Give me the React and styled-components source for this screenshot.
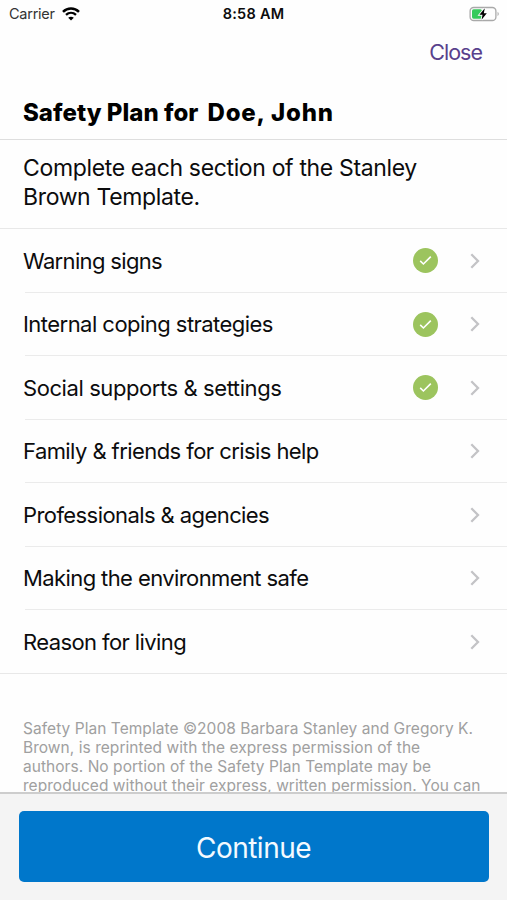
import React from 'react';
import styled, { createGlobalStyle, css } from 'styled-components';

const GlobalStyle = createGlobalStyle`
  *, *::before, *::after {
    box-sizing: border-box;
  }

  body {
    margin: 0;
    background: #fefefe;
    color: #0c0c0d;
    font-family: Inter, 'Liberation Sans', sans-serif;
  }
`;

const Screen = styled.div`
  display: flex;
  flex-direction: column;
  width: 507px;
  height: 900px;
  overflow: hidden;
`;

const StatusBar = styled.div`
  display: grid;
  grid-template-columns: 1fr auto 1fr;
  align-items: center;
  flex: none;
  height: 27px;
  padding: 0 7px 0 9px;
`;

const Carrier = styled.div`
  display: flex;
  align-items: center;
  gap: 7px;
  color: #333;
  font-size: 14.5px;
  letter-spacing: -0.25px;
`;

const Time = styled.div`
  padding-right: 2px;
  font-size: 14.5px;
  font-weight: 600;
  letter-spacing: 0.25px;
`;

const BatterySlot = styled.div`
  display: flex;
  justify-content: flex-end;
`;

const NavBar = styled.div`
  display: flex;
  align-items: center;
  justify-content: flex-end;
  flex: none;
  height: 51px;
  padding: 0 25px 2px;
`;

const CloseButton = styled.button`
  padding: 0;
  border: none;
  background: transparent;
  color: #58408c;
  font-family: inherit;
  font-size: 21.5px;
  letter-spacing: -1px;
`;

const Title = styled.h1`
  display: flex;
  gap: 9px;
  flex: none;
  height: 62px;
  margin: 0;
  padding: 0 23px;
  border-bottom: 1px solid #dedede;
  color: #000;
  font-size: 24px;
  font-weight: 800;
  line-height: 70px;
  letter-spacing: 0.03px;
  white-space: nowrap;
`;

const PatientName = styled.span`
  letter-spacing: 0.85px;
`;

const Intro = styled.p`
  flex: none;
  height: 88px;
  margin: 0;
  padding: 14px 23px 0;
  font-size: 23px;
  line-height: 29px;
  letter-spacing: -0.35px;
`;

const SectionList = styled.ul`
  flex: none;
  margin: 0;
  padding: 0;
  border-top: 1px solid #e8e8e8;
  border-bottom: 1px solid #e8e8e8;
  list-style: none;
`;

const SectionRow = styled.li`
  display: flex;
  align-items: center;
  height: ${({ $last }) => ($last ? 63 : 63.5)}px;
  padding: 0 26px 0 23px;

  ${({ $last }) =>
    !$last &&
    css`
      background: linear-gradient(#ebebeb, #ebebeb) 25px 100% / 100% 1px
        no-repeat;
    `}
`;

const SectionLabel = styled.span`
  flex: 1;
  font-size: 22px;
  letter-spacing: ${({ $tracking }) => $tracking}px;
  white-space: nowrap;
`;

const CheckBadge = styled.span`
  display: flex;
  align-items: center;
  justify-content: center;
  width: 25px;
  height: 25px;
  margin-right: 31px;
  border-radius: 50%;
  background: #9cc45e;
`;

const Legal = styled.div`
  flex: 1;
  min-height: 0;
  padding: 44.5px 23px 0;
  color: #a0a0a0;
  font-size: 15.5px;
  line-height: 19px;
  white-space: nowrap;
`;

const LegalLine = styled.div`
  letter-spacing: 0.045px;
`;

const BottomBar = styled.footer`
  flex: none;
  height: 108px;
  padding: 17px 18px 0 19px;
  border-top: 2px solid #cdcdcd;
  background: #f4f4f4;
`;

const ContinueButton = styled.button`
  display: block;
  width: 100%;
  height: 71px;
  padding: 2px 1px 0 0;
  border: none;
  border-radius: 5px;
  background: #0077cb;
  color: #f4faff;
  font-family: inherit;
  font-size: 28px;
  letter-spacing: -0.5px;
`;

const WifiIcon = () => (
  <svg width="18" height="14" viewBox="0 0 18 14" fill="none">
    <path d="M1 4.8C5.5 0.4 12.5 0.4 17 4.8" stroke="#000" strokeWidth="2.5" />
    <path d="M4 7.9C6.9 5.2 11.1 5.2 14 7.9" stroke="#000" strokeWidth="2.3" />
    <path d="M9 13.5L6.2 10.7C7.8 9.3 10.2 9.3 11.8 10.7Z" fill="#000" />
  </svg>
);

const BatteryIcon = () => (
  <svg width="31" height="16" viewBox="0 0 31 16" fill="none">
    <rect
      x="1.1"
      y="1.5"
      width="25.8"
      height="13"
      rx="3.6"
      stroke="#a9a9a9"
      strokeWidth="1.3"
    />
    <path d="M28.6 5.8Q30.8 8 28.6 10.2Z" fill="#a0a0a0" />
    <rect x="3" y="3.3" width="10" height="9.4" rx="1.6" fill="#35ca5b" />
    <path
      d="M15.8 2.2L10.4 8.8H13.5L12.6 13.8L17.8 7.2H14.8Z"
      fill="#000"
      stroke="#fefefe"
      strokeWidth="1.8"
      paintOrder="stroke"
    />
  </svg>
);

const CheckIcon = () => (
  <svg width="13" height="11" viewBox="0 0 13 11" fill="none">
    <path d="M1.2 5.9L4.4 9L11.8 1.6" stroke="#fff" strokeWidth="1.6" />
  </svg>
);

const Chevron = () => (
  <svg width="12" height="16" viewBox="0 0 12 16" fill="none">
    <path d="M2.3 1.3L9 8L2.3 14.7" stroke="#c3c3c6" strokeWidth="2.3" />
  </svg>
);

const sections = [
  { label: 'Warning signs', tracking: -0.66, done: true },
  { label: 'Internal coping strategies', tracking: -0.54, done: true },
  { label: 'Social supports & settings', tracking: -0.42, done: true },
  { label: 'Family & friends for crisis help', tracking: -0.57 },
  { label: 'Professionals & agencies', tracking: -0.58 },
  { label: 'Making the environment safe', tracking: -0.6 },
  { label: 'Reason for living', tracking: -0.6 },
];

const legalLines = [
  'Safety Plan Template ©2008 Barbara Stanley and Gregory K.',
  'Brown, is reprinted with the express permission of the',
  'authors. No portion of the Safety Plan Template may be',
  'reproduced without their express, written permission. You can',
];

export default function App() {
  return (
    <Screen>
      <GlobalStyle />
      <StatusBar>
        <Carrier>
          Carrier
          <WifiIcon />
        </Carrier>
        <Time>8:58 AM</Time>
        <BatterySlot>
          <BatteryIcon />
        </BatterySlot>
      </StatusBar>
      <NavBar>
        <CloseButton>Close</CloseButton>
      </NavBar>
      <Title>
        <span>Safety Plan for</span>
        <PatientName>Doe, John</PatientName>
      </Title>
      <Intro>
        Complete each section of the Stanley
        <br />
        Brown Template.
      </Intro>
      <SectionList>
        {sections.map(({ label, tracking, done }, index) => (
          <SectionRow key={label} $last={index === sections.length - 1}>
            <SectionLabel $tracking={tracking}>{label}</SectionLabel>
            {done && (
              <CheckBadge>
                <CheckIcon />
              </CheckBadge>
            )}
            <Chevron />
          </SectionRow>
        ))}
      </SectionList>
      <Legal>
        {legalLines.map(line => (
          <LegalLine key={line}>{line}</LegalLine>
        ))}
      </Legal>
      <BottomBar>
        <ContinueButton>Continue</ContinueButton>
      </BottomBar>
    </Screen>
  );
}
